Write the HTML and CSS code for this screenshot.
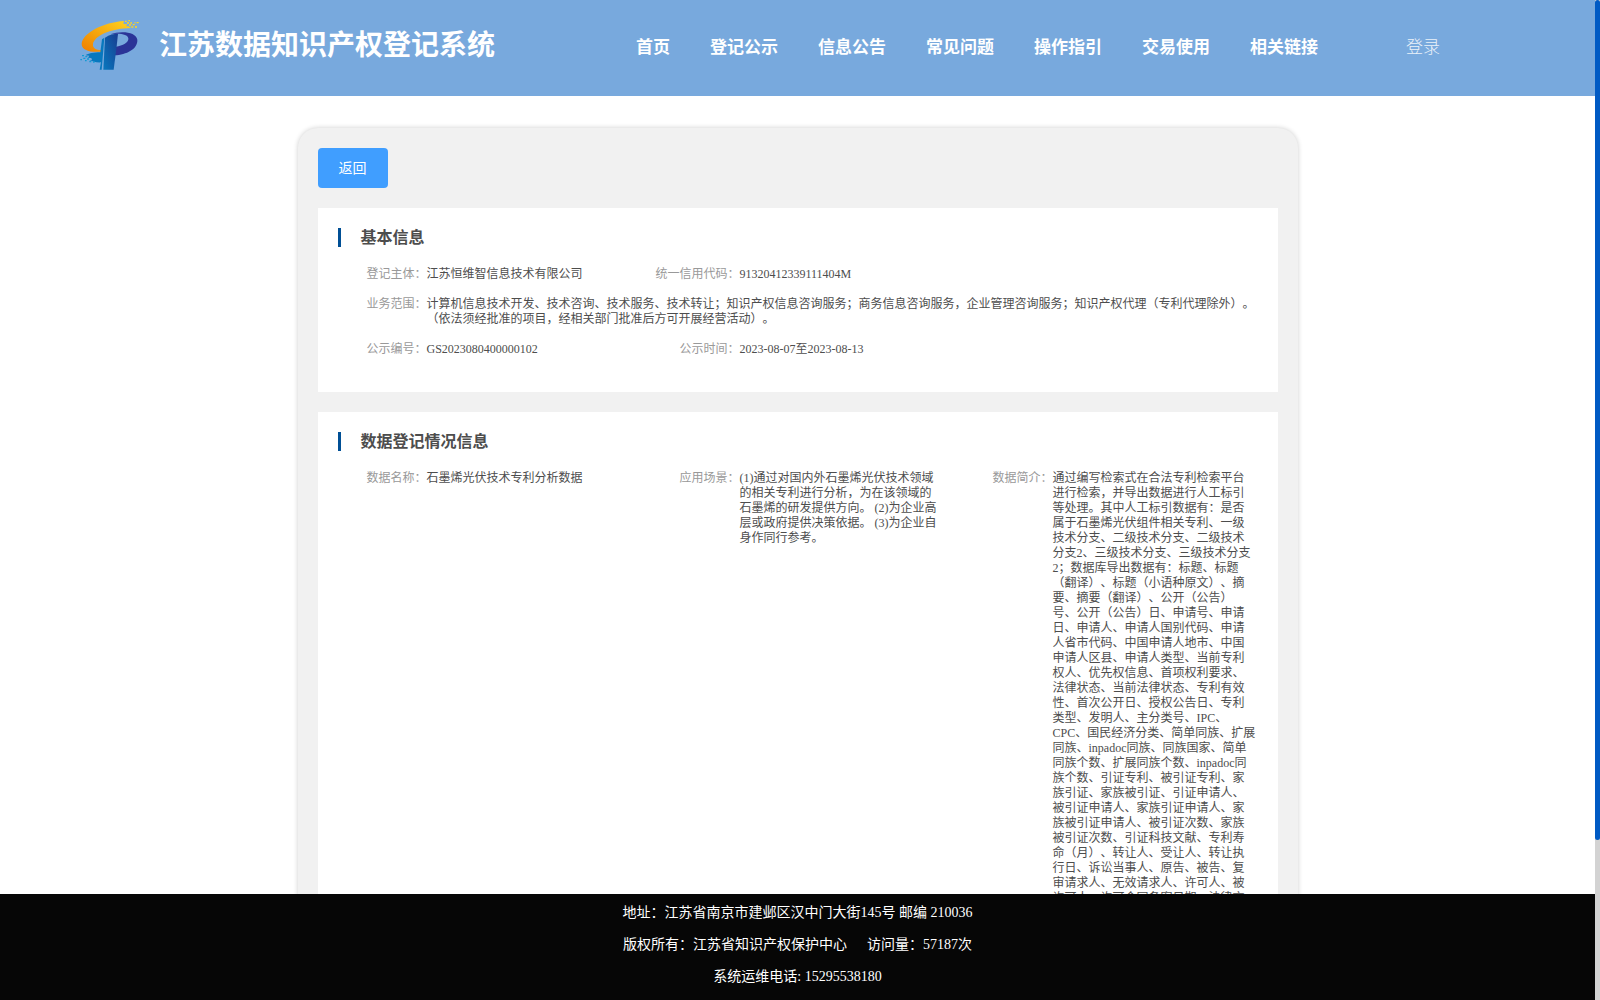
FILE: index.html
```html
<!DOCTYPE html>
<html lang="zh-CN">
<head>
    <meta charset="UTF-8">
    <meta name="viewport" content="width=device-width, initial-scale=1.0">
    <title>江苏数据知识产权登记系统</title>
    <link rel="stylesheet" href="styles.css">
</head>
<body>
    <header class="header">
        <svg class="logo" viewBox="57 57 183 156" aria-hidden="true">
            <defs>
                <linearGradient id="orange" x1="0" y1="1" x2="1" y2="0">
                    <stop offset="0" stop-color="#ee7d00"/>
                    <stop offset="1" stop-color="#ffd51e"/>
                </linearGradient>
                <linearGradient id="stem" x1="0" y1="1" x2="1" y2="0">
                    <stop offset="0" stop-color="#0878be"/>
                    <stop offset="1" stop-color="#183c90"/>
                </linearGradient>
            </defs>
            <path fill="url(#orange)" d="M192 63C130 67 68 99 65 131C64 149 88 158 124 155L125 151C107 150 97 143 99 132C103 109 147 86 213 84L206 79L198 79L202 73L190 72Z"/>
            <path fill="#ffd51e" d="M195 62h5v4h-5zM205 60h5v4h-5zM201 67h6v4h-6zM211 67h5v4h-5zM207 73h6v4h-6zM218 72h6v4h-6zM214 79h6v4h-6zM225 79h6v4h-6zM230 66h6v4h-6zM223 67h4v3h-4z"/>
            <path fill="#2b3497" d="M150 103C184 91 229 96 232 119C234 147 199 164 164 166L168 140C188 138 207 127 205 115C203 103 181 99 150 103Z"/>
            <path fill="url(#stem)" d="M135 113C148 103 162 101 174 101L170 139L161 209H130Z"/>
            <path fill="#0878be" d="M126 118L133 113L125 209H119L123 187C109 188 97 184 88 180H96L94 174L84 173L88 167L77 166C84 160 102 157 121 157Z"/>
            <path fill="#129bd4" d="M66 165h6v4h-6zM76 168h6v4h-6zM70 173h6v4h-6zM61 177h5v4h-5zM81 175h6v4h-6zM75 180h5v4h-5zM88 183h6v4h-6zM99 184h5v4h-5z"/>
        </svg>
        <h1 class="site-name">江苏数据知识产权登记系统</h1>
        <nav class="nav">
            <a href="#">首页</a>
            <a href="#">登记公示</a>
            <a href="#">信息公告</a>
            <a href="#">常见问题</a>
            <a href="#">操作指引</a>
            <a href="#">交易使用</a>
            <a href="#">相关链接</a>
        </nav>
        <a class="login" href="#">登录</a>
    </header>

    <main class="panel">
        <button class="back" type="button">返回</button>

        <section class="card">
            <h2 class="card-title">基本信息</h2>
            <dl class="fields">
                <div class="field">
                    <dt>登记主体：</dt>
                    <dd>江苏恒维智信息技术有限公司</dd>
                </div>
                <div class="field">
                    <dt>统一信用代码：</dt>
                    <dd>91320412339111404M</dd>
                </div>
                <div class="field wide">
                    <dt>业务范围：</dt>
                    <dd>计算机信息技术开发、技术咨询、技术服务、技术转让；知识产权信息咨询服务；商务信息咨询服务，企业管理咨询服务；知识产权代理（专利代理除外）。（依法须经批准的项目，经相关部门批准后方可开展经营活动）。</dd>
                </div>
                <div class="field">
                    <dt>公示编号：</dt>
                    <dd>GS2023080400000102</dd>
                </div>
                <div class="field">
                    <dt>公示时间：</dt>
                    <dd>2023-08-07至2023-08-13</dd>
                </div>
            </dl>
        </section>

        <section class="card">
            <h2 class="card-title">数据登记情况信息</h2>
            <dl class="fields">
                <div class="field">
                    <dt>数据名称：</dt>
                    <dd>石墨烯光伏技术专利分析数据</dd>
                </div>
                <div class="field">
                    <dt>应用场景：</dt>
                    <dd>(1)通过对国内外石墨烯光伏技术领域的相关专利进行分析，为在该领域的石墨烯的研发提供方向。 (2)为企业高层或政府提供决策依据。 (3)为企业自身作同行参考。</dd>
                </div>
                <div class="field">
                    <dt>数据简介：</dt>
                    <dd>通过编写检索式在合法专利检索平台进行检索，并导出数据进行人工标引等处理。其中人工标引数据有：是否属于石墨烯光伏组件相关专利、一级技术分支、二级技术分支、二级技术分支2、三级技术分支、三级技术分支2；数据库导出数据有：标题、标题（翻译）、标题（小语种原文）、摘要、摘要（翻译）、公开（公告）号、公开（公告）日、申请号、申请日、申请人、申请人国别代码、申请人省市代码、中国申请人地市、中国申请人区县、申请人类型、当前专利权人、优先权信息、首项权利要求、法律状态、当前法律状态、专利有效性、首次公开日、授权公告日、专利类型、发明人、主分类号、IPC、CPC、国民经济分类、简单同族、扩展同族、inpadoc同族、同族国家、简单同族个数、扩展同族个数、inpadoc同族个数、引证专利、被引证专利、家族引证、家族被引证、引证申请人、被引证申请人、家族引证申请人、家族被引证申请人、被引证次数、家族被引证次数、引证科技文献、专利寿命（月）、转让人、受让人、转让执行日、诉讼当事人、原告、被告、复审请求人、无效请求人、许可人、被许可人、许可合同备案日期、法律文书日期。</dd>
                </div>
            </dl>
        </section>
    </main>

    <footer class="footer">
        <p>地址：江苏省南京市建邺区汉中门大街145号 邮编 210036</p>
        <p><span>版权所有：江苏省知识产权保护中心</span><span class="visits">访问量：57187次</span></p>
        <p>系统运维电话: 15295538180</p>
    </footer>

    <div class="scrollbar" aria-hidden="true"><div class="scrollbar-thumb"></div></div>
</body>
</html>
```

FILE: styles.css
```css
* {
    box-sizing: border-box;
    margin: 0;
    padding: 0;
}
html {
    scrollbar-width: none;
}
body {
    font-family: "Liberation Serif", "Noto Sans CJK SC", serif;
    font-size: 14px;
    color: #4d4d4d;
    background: #fff;
    padding: 0 5px 136px 0;
    text-spacing-trim: space-all;
}
a {
    color: #fff;
    text-decoration: none;
}
.header {
    display: flex;
    align-items: center;
    height: 96px;
    padding: 0 79px;
    background: #78a9dd;
    color: #fff;
}
.logo {
    width: 61px;
    height: 52px;
    margin-bottom: 6px;
}
.site-name {
    margin: 0 141px 4px 19px;
    font-size: 28px;
    line-height: 40px;
    white-space: nowrap;
}
.nav {
    display: flex;
    gap: 40px;
    margin-bottom: 5px;
    font-size: 17px;
    font-weight: bold;
    white-space: nowrap;
}
.login {
    margin: 0 0 5px 88px;
    font-size: 17px;
    font-weight: 300;
    white-space: nowrap;
    opacity: 0.85;
}
.panel {
    max-width: 1000px;
    margin: 32px auto 0;
    padding: 20px;
    background: #f1f1f1;
    border-radius: 20px;
    box-shadow: 0 0 5px rgba(0, 0, 0, 0.2);
}
.back {
    display: block;
    width: 70px;
    height: 40px;
    padding-bottom: 2px;
    font: inherit;
    color: #fff;
    background: #409eff;
    border: none;
    border-radius: 4px;
    cursor: pointer;
}
.card {
    margin-top: 20px;
    padding: 20px 21px 35px 0;
    background: #fff;
}
.card-title {
    margin: 0 0 20px 20px;
    padding-left: 20px;
    border-left: 3px solid #004f95;
    font-size: 16px;
    line-height: 19px;
}
.fields {
    display: grid;
    grid-template-columns: repeat(3, 1fr);
    row-gap: 15px;
    font-size: 12px;
    line-height: 15px;
}
.field {
    display: grid;
    grid-template-columns: 109px 1fr;
}
.field dt {
    color: #999;
    text-align: right;
    white-space: nowrap;
}
.field dd {
    padding-right: 1px;
}
.wide {
    grid-column: span 3;
}
.footer {
    position: fixed;
    left: 0;
    right: 5px;
    bottom: 0;
    padding: 3px 0 7px;
    background: #060606;
    color: #fff;
    line-height: 32px;
    text-align: center;
}
.visits {
    margin-left: 20px;
}
.scrollbar {
    position: fixed;
    top: 0;
    right: 0;
    bottom: 0;
    width: 5px;
    background: #d3d3d3;
}
.scrollbar-thumb {
    height: 84%;
    background: #005ac4;
    border-radius: 3px;
}
```
